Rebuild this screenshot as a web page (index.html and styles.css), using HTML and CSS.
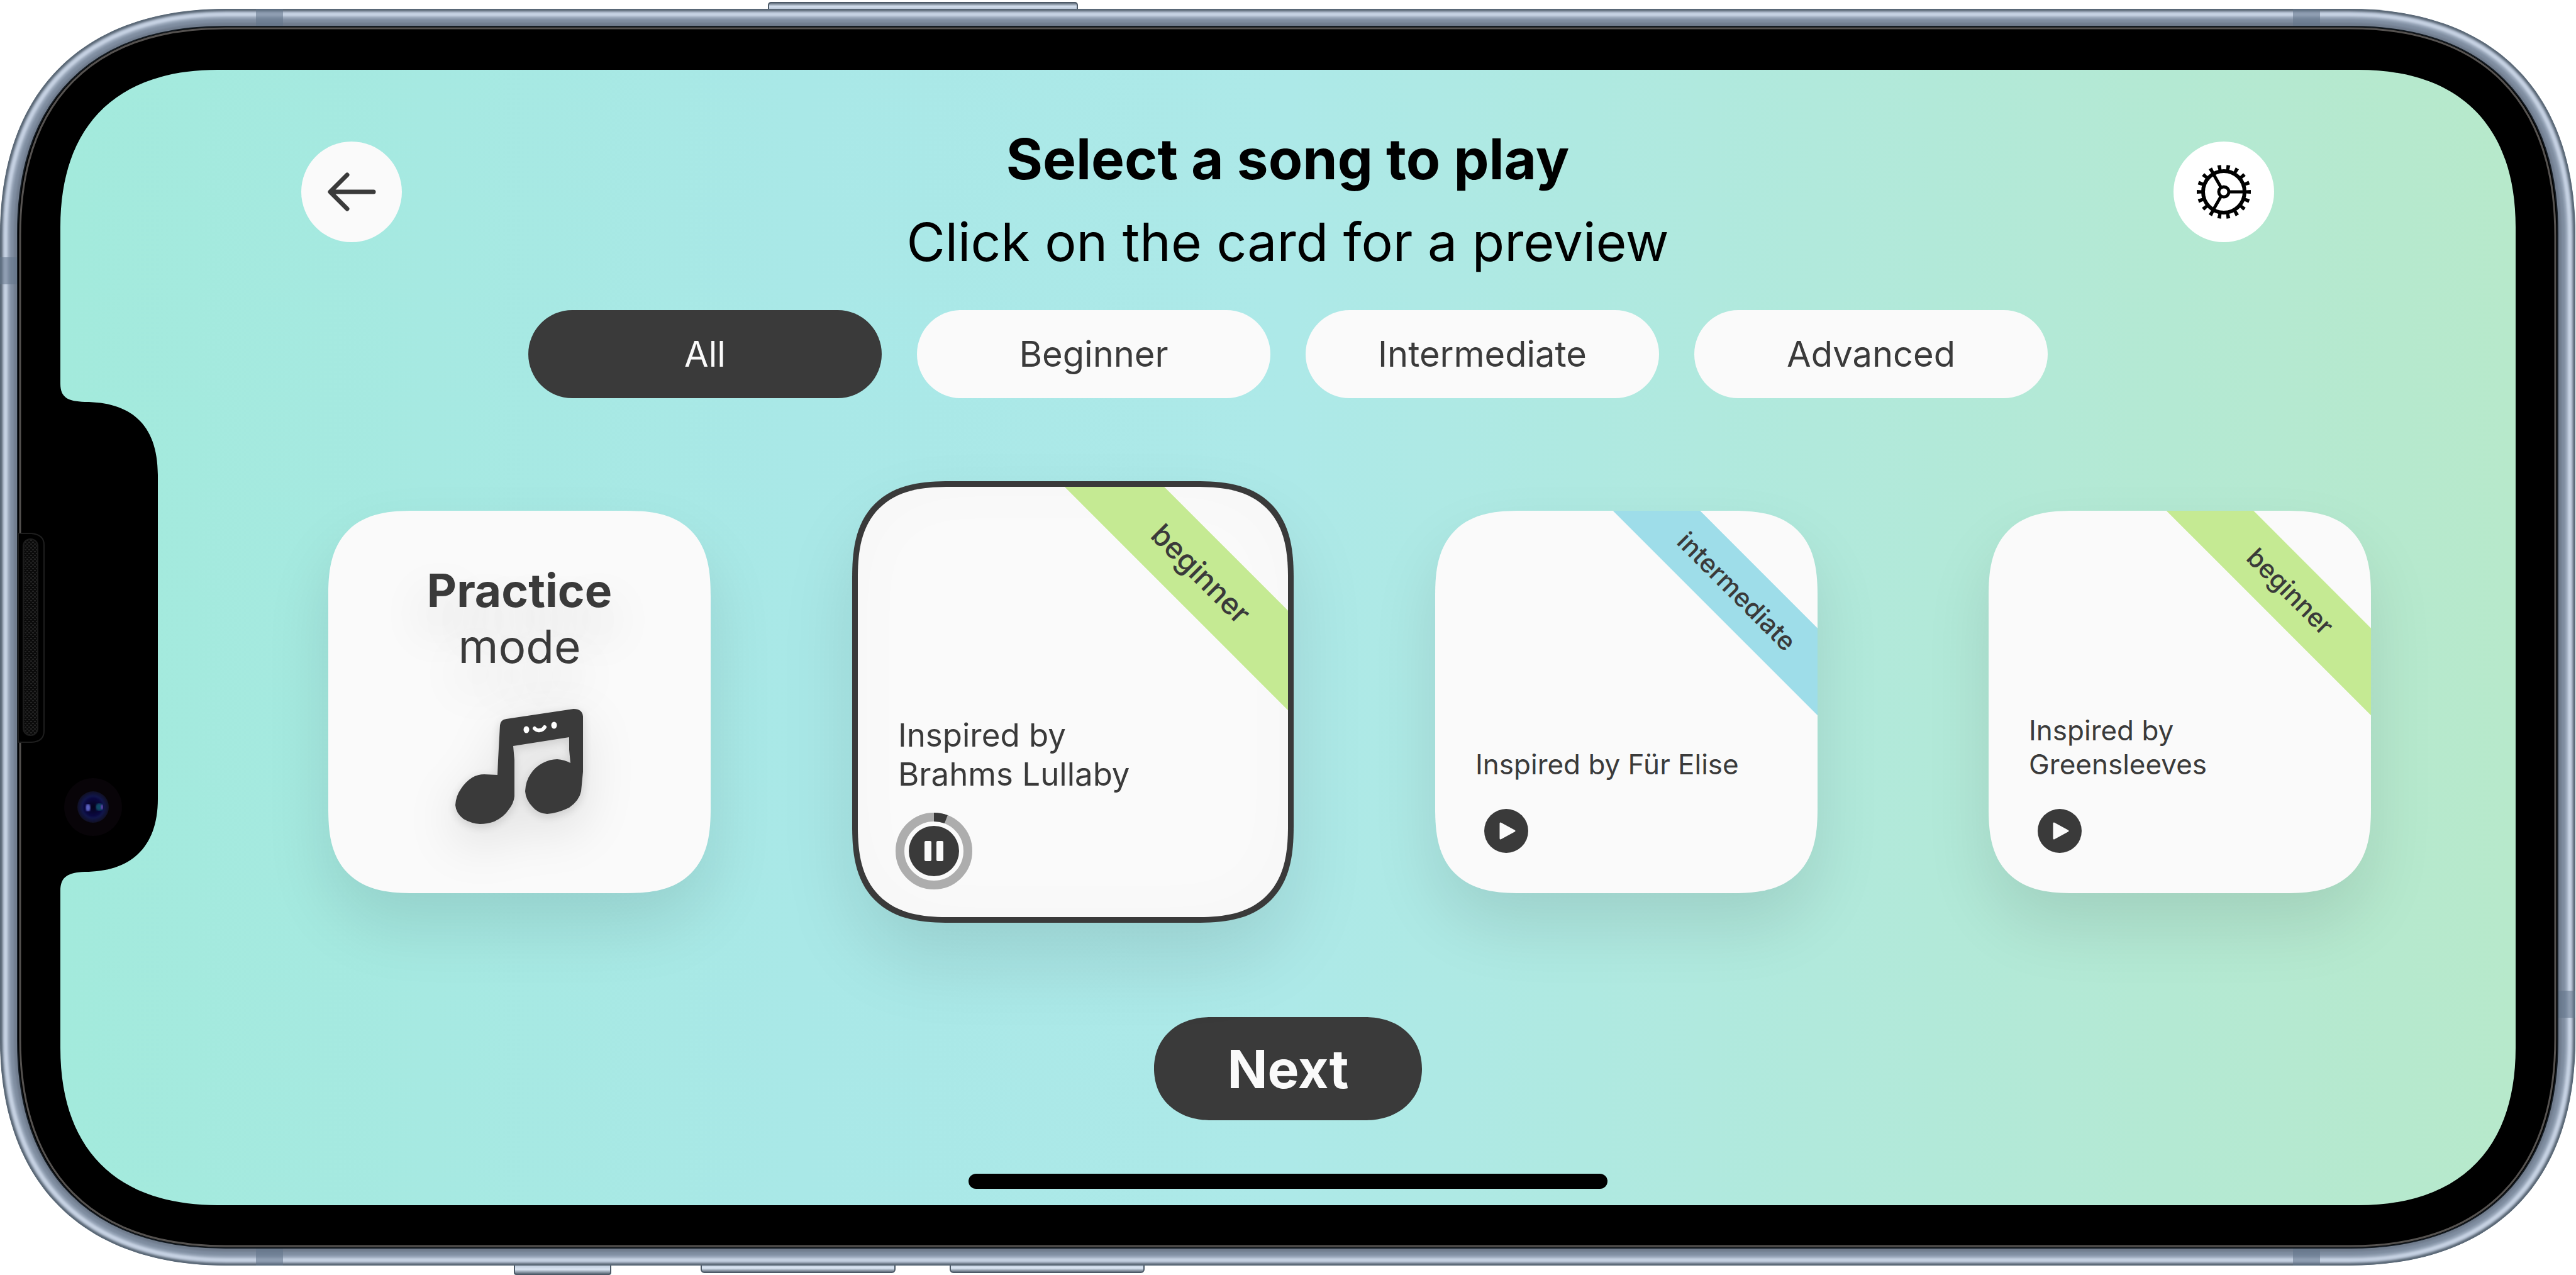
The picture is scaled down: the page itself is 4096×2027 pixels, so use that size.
FILE: index.html
```html
<!DOCTYPE html>
<html lang="en">
<head>
<meta charset="utf-8">
<meta name="viewport" content="width=device-width, initial-scale=1">
<title>Select a song</title>
<link rel="stylesheet" href="styles.css">
</head>
<body>
<div class="device">
  <svg class="device-art" viewBox="0 0 4096 2027" preserveAspectRatio="none" aria-hidden="true">
    <defs>
      <linearGradient id="screenFill" x1="0" x2="1" y1="0" y2="0">
        <stop offset="0" stop-color="#a3eadc"/>
        <stop offset=".3" stop-color="#a9e8e7"/>
        <stop offset=".5" stop-color="#ade9e8"/>
        <stop offset=".62" stop-color="#afe9e1"/>
        <stop offset="1" stop-color="#b7e9cb"/>
      </linearGradient>
      <linearGradient id="keyTop" x1="0" x2="0" y1="0" y2="1">
        <stop offset="0" stop-color="#4d5a68"/>
        <stop offset=".3" stop-color="#d3dfee"/>
        <stop offset="1" stop-color="#8b99ac"/>
      </linearGradient>
      <linearGradient id="keyBottom" x1="0" x2="0" y1="0" y2="1">
        <stop offset="0" stop-color="#8b99ac"/>
        <stop offset=".7" stop-color="#dbe6f4"/>
        <stop offset="1" stop-color="#4d5a68"/>
      </linearGradient>
      <radialGradient id="lens">
        <stop offset="0" stop-color="#05031c"/>
        <stop offset=".55" stop-color="#0a0840"/>
        <stop offset=".7" stop-color="#11164a"/>
        <stop offset="1" stop-color="#101024"/>
      </radialGradient>
      <pattern id="mesh" width="6" height="6" patternUnits="userSpaceOnUse">
        <rect width="6" height="6" fill="#0b0b0b"/>
        <path d="M0 1h3M3 4h3" stroke="#3a3a3a" stroke-width="1"/>
      </pattern>
      <filter id="soft" x="0" y="0" width="1" height="1"><feGaussianBlur stdDeviation="1.5"/></filter>
      <path id="shell" d="M0 374C0 145 131 14 360 14H3735C3964 14 4095 145 4095 374V1652C4095 1881 3964 2012 3735 2012H360C131 2012 0 1881 0 1652Z"/>
      <clipPath id="shellClip"><use href="#shell"/></clipPath>
    </defs>

    <g stroke="#4d5a68" stroke-width="2">
      <rect x="1222" y="4" width="491" height="20" rx="4" fill="url(#keyTop)"/>
      <rect x="818" y="2000" width="153" height="26" rx="3" fill="url(#keyBottom)"/>
      <rect x="1115" y="2000" width="308" height="23" rx="5" fill="url(#keyBottom)"/>
      <rect x="1511" y="2000" width="308" height="23" rx="5" fill="url(#keyBottom)"/>
    </g>

    <g clip-path="url(#shellClip)">
      <use href="#shell" fill="#6d7a8b"/>
      <g fill="none" filter="url(#soft)">
        <use href="#shell" stroke="#6f7c8d" stroke-width="60"/>
        <use href="#shell" stroke="#7f8da0" stroke-width="44"/>
        <use href="#shell" stroke="#97a5b8" stroke-width="32"/>
        <use href="#shell" stroke="#c6d2e3" stroke-width="24"/>
        <use href="#shell" stroke="#a0adbf" stroke-width="12"/>
        <use href="#shell" stroke="#586674" stroke-width="8"/>
      </g>
      <g fill="#62758a" fill-opacity=".55">
        <rect x="407" y="14" width="43" height="32"/>
        <rect x="3646" y="14" width="43" height="32"/>
        <rect x="407" y="1980" width="43" height="32"/>
        <rect x="3646" y="1980" width="43" height="32"/>
        <rect x="0" y="409" width="30" height="43"/>
        <rect x="4065" y="1575" width="30" height="43"/>
      </g>
    </g>
    <path d="M28 372C28 159 145 42 358 42H3737C3950 42 4067 159 4067 372V1654C4067 1867 3950 1984 3737 1984H358C145 1984 28 1867 28 1654Z" fill="#000" stroke="#141b22" stroke-width="2"/>
    <path d="M32 375C32 160 147 45 358 45H3737C3948 45 4063 160 4063 375V1651C4063 1866 3948 1981 3737 1981H358C147 1981 32 1866 32 1651Z" fill="#000" stroke="#555250" stroke-width="3"/>

    <path fill="url(#screenFill)" d="M96 361C96 200 185 111 346 111H3750C3911 111 4000 200 4000 361V1666C4000 1827 3911 1916 3750 1916H346C185 1916 96 1827 96 1666V1416C96 1394 108 1387 135 1386C205 1386 251 1350 251 1270V755C251 672 205 639 135 639C108 638 96 632 96 610Z"/>

    <path d="M29 848H50Q70 850 70 866V1162Q70 1179 50 1180H29Z" fill="#000" stroke="#1e1e1e" stroke-width="2"/>
    <rect x="37" y="857" width="23" height="312" rx="11" fill="url(#mesh)" stroke="#1c1c1c" stroke-width="2"/>

    <circle cx="148" cy="1283" r="46" fill="#080408"/>
    <circle cx="148" cy="1283" r="25" fill="url(#lens)"/>
    <ellipse cx="140" cy="1284" rx="4" ry="6" fill="#5b62c4" filter="url(#soft)"/>
    <ellipse cx="158" cy="1283" rx="6" ry="6" fill="#0f4a66" filter="url(#soft)"/>
    <ellipse cx="162" cy="1283" rx="2" ry="4" fill="#6a3fb0" filter="url(#soft)"/>
  </svg>

  <main class="screen">
    <header class="top">
      <button class="round" type="button" aria-label="Back">
        <svg viewBox="0 0 160 160" aria-hidden="true"><path d="M115 80H47M73 53L46 80L73 107" fill="none" stroke="#3a3a3a" stroke-width="7" stroke-linecap="round" stroke-linejoin="round"/></svg>
      </button>
      <div class="headings">
        <h1>Select a song to play</h1>
        <p>Click on the card for a preview</p>
      </div>
      <button class="round round-white" type="button" aria-label="Settings">
        <svg viewBox="0 0 160 160" aria-hidden="true">
          <g fill="none" stroke="#000">
            <circle cx="80" cy="80" r="39" stroke-width="8" pathLength="180" stroke-dasharray="4 6" stroke-dashoffset="2"/>
            <circle cx="80" cy="80" r="33" stroke-width="6"/>
            <circle cx="80" cy="80" r="8" stroke-width="5"/>
            <path d="M89 80H113M75 72L63 51M75 88L63 109" stroke-width="5"/>
          </g>
        </svg>
      </button>
    </header>

    <nav class="filters" aria-label="Difficulty">
      <button class="pill pill-on" type="button" aria-pressed="true">All</button>
      <button class="pill" type="button" aria-pressed="false">Beginner</button>
      <button class="pill" type="button" aria-pressed="false">Intermediate</button>
      <button class="pill" type="button" aria-pressed="false">Advanced</button>
    </nav>

    <section class="songs" aria-label="Songs">
      <article class="card practice">
        <h2><b>Practice</b><br>mode</h2>
        <svg class="note" viewBox="0 0 204 184" aria-hidden="true">
          <path fill="#3a3a3a" d="M71 27Q72 18 81 17L188 1Q202 1 203 13V101L200 132Q197 147 181 158Q162 167 146 168Q131 167 123 157Q112 146 111 132Q112 115 120 104Q127 93 139 87Q150 81 162 81Q174 82 183 87L181 66V46L92 60L94 82V140Q93 151 85 161Q77 173 62 180Q51 184 39 184Q25 183 13 176Q1 167 0 154Q1 139 9 128Q16 117 27 110Q36 105 46 105L67 106L68 82Z"/>
          <g fill="#fff"><ellipse cx="113" cy="34" rx="4.500" ry="5.500"/><ellipse cx="157" cy="27" rx="4.500" ry="5.500"/></g>
          <path d="M126 32Q130 36 134 35Q139 35 142 30" fill="none" stroke="#fff" stroke-width="6" stroke-linecap="round"/>
        </svg>
      </article>

      <article class="card selected">
        <span class="ribbon green">beginner</span>
        <h2>Inspired by<br>Brahms Lullaby</h2>
        <button class="play" type="button" aria-label="Pause">
          <svg viewBox="0 0 122 122" aria-hidden="true">
            <circle cx="61" cy="61" r="54" fill="none" stroke="#adadad" stroke-width="14"/>
            <circle cx="61" cy="61" r="54" fill="none" stroke="#3a3a3a" stroke-width="14" pathLength="360" stroke-dasharray="21 339" transform="rotate(-90 61 61)"/>
            <circle cx="61" cy="61" r="40" fill="#3a3a3a"/>
            <path fill="#fafafa" d="M48 45h7q2 0 2 2v28q0 2-2 2h-7q-2 0-2-2v-28q0-2 2-2zM67 45h7q2 0 2 2v28q0 2-2 2h-7q-2 0-2-2v-28q0-2 2-2z"/>
          </svg>
        </button>
      </article>

      <article class="card">
        <span class="ribbon blue">intermediate</span>
        <h2>Inspired by Für Elise</h2>
        <button class="play" type="button" aria-label="Play">
          <svg viewBox="0 0 106 106" aria-hidden="true"><circle cx="53" cy="53" r="35" fill="#3a3a3a"/><path d="M44 41V65L66 53Z" fill="#fafafa" stroke="#fafafa" stroke-width="3" stroke-linejoin="round"/></svg>
        </button>
      </article>

      <article class="card">
        <span class="ribbon green">beginner</span>
        <h2>Inspired by<br>Greensleeves</h2>
        <button class="play" type="button" aria-label="Play">
          <svg viewBox="0 0 106 106" aria-hidden="true"><circle cx="53" cy="53" r="35" fill="#3a3a3a"/><path d="M44 41V65L66 53Z" fill="#fafafa" stroke="#fafafa" stroke-width="3" stroke-linejoin="round"/></svg>
        </button>
      </article>
    </section>

    <button class="next" type="button">Next</button>
    <div class="home-bar"></div>
  </main>
</div>
</body>
</html>
```
FILE: styles.css
```css
* { box-sizing: border-box; }

body {
  margin: 0;
  background: #fff;
  color: #000;
  font-family: Inter, "Liberation Sans", sans-serif;
  overflow-x: hidden;
}

h1, h2, p { margin: 0; font-weight: 400; }

button {
  border: 0;
  padding: 0;
  font: inherit;
  color: inherit;
  cursor: pointer;
}

svg { display: block; }

.device {
  position: relative;
  min-height: 100vh;
}

.device-art {
  position: absolute;
  inset: 0;
  width: 100%;
  height: 100%;
}

/* Content sits inside the bezel */
.screen {
  position: relative;
  display: flex;
  flex-direction: column;
  align-items: center;
  padding: 187px 96px 0;
}

.top {
  width: 100%;
  padding: 0 384px 0 383px;
  display: flex;
  justify-content: space-between;
  align-items: flex-start;
}

.headings {
  text-align: center;
  font-size: 84px;
  line-height: 132px;
}

.headings h1 { font-size: 89px; font-weight: 700; }

.round {
  width: 160px;
  height: 160px;
  margin-top: 38px;
  border-radius: 50%;
  background: #fafafa;
}

.round-white { background: #fff; }

.filters {
  display: flex;
  gap: 56px;
  margin-top: 42px;
}

.pill {
  width: 562px;
  height: 140px;
  border-radius: 70px;
  background: #fafafa;
  color: #3a3a3a;
  font-size: 56px;
}

.pill-on { background: #3a3a3a; color: #fafafa; }

/* Song carousel: equal slots, the selected card fills more of its slot */
.songs {
  width: 100%;
  margin-top: 132px;
  padding-left: 290px;
  display: grid;
  grid-template-columns: repeat(4, 880px);
  justify-items: center;
  align-items: center;
}

.card {
  position: relative;
  width: 608px;
  height: 608px;
  padding: 0 60px 46px;
  display: flex;
  flex-direction: column;
  justify-content: flex-end;
  align-items: flex-start;
  gap: 26px;
  overflow: hidden;
  border-radius: 110px;
  background: #fafafa;
  color: #3a3a3a;
  box-shadow: 0 52px 104px rgba(0, 0, 0, .1);
}

.card h2 {
  padding-left: 4px;
  font-size: 44px;
  line-height: 54px;
}

.selected {
  width: 702px;
  height: 702px;
  border: 9px solid #3a3a3a;
  border-radius: 128px;
  padding-bottom: 44px;
  gap: 30px;
  box-shadow: 0 60px 120px rgba(0, 0, 0, .1), inset 0 0 120px rgba(0, 0, 0, .02);
}

.card.selected h2 { font-size: 51px; line-height: 62px; }

.play {
  width: 106px;
  height: 106px;
  background: none;
}

.selected .play { width: 122px; height: 122px; }

/* Difficulty band across the top right corner */
.ribbon {
  position: absolute;
  top: 79px;
  right: -172px;
  width: 600px;
  height: 98px;
  line-height: 98px;
  text-align: center;
  font-size: 41px;
  font-weight: 500;
  transform: rotate(45deg);
}

.selected .ribbon {
  top: 82px;
  right: -162px;
  height: 112px;
  line-height: 112px;
  font-size: 47px;
}

.green { background: #c5ea93; }
.blue { background: #9edde9; }

.card.practice {
  justify-content: flex-start;
  align-items: center;
  padding: 82px 0 0;
  gap: 54px;
}

.card.practice h2 {
  padding: 0;
  text-align: center;
  font-size: 73px;
  line-height: 89px;
  text-shadow: 0 40px 80px rgba(0, 0, 0, .2);
}

.note {
  width: 204px;
  height: 184px;
  overflow: visible;
  filter: drop-shadow(0 4px 8px rgba(0, 0, 0, .15)) drop-shadow(0 26px 40px rgba(0, 0, 0, .12));
}

.next {
  width: 426px;
  height: 164px;
  margin-top: 150px;
  border-radius: 82px;
  background: #3a3a3a;
  color: #fafafa;
  font-size: 84px;
  font-weight: 700;
}

.home-bar {
  width: 1016px;
  height: 24px;
  margin-top: 85px;
  border-radius: 12px;
  background: #000;
}

/* Continuous corners where the browser can draw them */
@supports (corner-shape: superellipse(1.5)) {
  .card { corner-shape: superellipse(1.4); border-radius: 136px; }
  .selected { border-radius: 156px; }
  .next { corner-shape: superellipse(1.1); border-radius: 90px / 82px; }
}
```
